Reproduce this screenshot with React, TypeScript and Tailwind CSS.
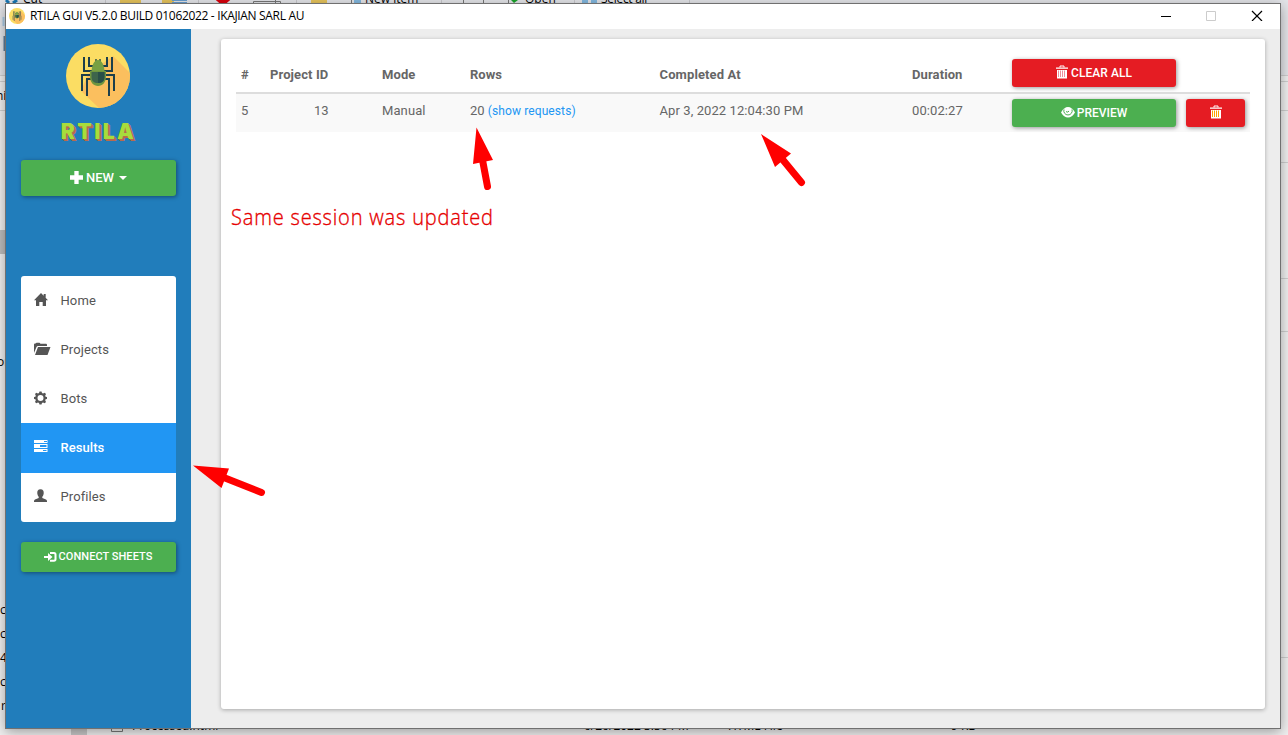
import React from "react";

type IconProps = { className?: string; children: React.ReactNode; box?: string };

function Glyph({ className, children, box = "0 0 14 14" }: IconProps) {
  return (
    <svg viewBox={box} className={className} fill="currentColor">
      {children}
    </svg>
  );
}

function SpiderLogo({ className }: { className: string }) {
  return (
    <svg viewBox="0 0 64 64" className={className}>
      <defs>
        <clipPath id="disc">
          <circle cx="32" cy="32" r="32" />
        </clipPath>
      </defs>
      <g clipPath="url(#disc)">
        <rect width="64" height="64" fill="#fbdd63" />
        <path d="M47 12L64 29V64H33L15 47L22 30Z" fill="#fbbf5e" />
      </g>
      <g fill="none" stroke="#1d3f4b" strokeWidth="2">
        <path d="M18 13V27H27M23 13V22H28M46 13V27H37M41 13V22H36" />
        <path d="M25 31H16V47M27 35H21V52M39 31H48V47M37 35H43V52" />
      </g>
      <path d="M30 15V19M34 15V19" stroke="#2f5144" strokeWidth="1.500" />
      <path d="M32 16C28 16 26 21 25.500 27H38.500C38 21 36 16 32 16Z" fill="#78a043" />
      <path d="M24 27H40V33C40 38 36.500 42 32 42S24 38 24 33Z" fill="#6f963f" />
      <path d="M25.500 28H38.500V33C38.500 37 36 39 32 39S25.500 37 25.500 33Z" fill="#3d654b" />
      <path d="M32 28H38.500V33C38.500 37 36 39 32 39Z" fill="#294f48" />
    </svg>
  );
}

function Home() {
  return <Glyph className="h-3.5 w-3.5"><path d="M7 0L14 7.200H12V13H8.700V9H5.300V13H2V7.200H0ZM9.700 1H11.700V5L9.700 3Z" /></Glyph>;
}
function Folder() {
  return <Glyph className="h-3.5 w-[17px]" box="0 0 17 14"><path d="M0 11V2.500Q0 1.500 1 1.500H1.500L2.500 .8H5.500L6.500 1.800H12Q13 1.800 13 3V4H4Q3 4 2.500 5ZM4 5H16.500L13.500 13H1Z" /></Glyph>;
}
function Gear() {
  return <Glyph className="h-3.5 w-3.5"><path fillRule="evenodd" d="M5.500 .4H7.500L8 2.100L9 2.500L10.700 1.700L12 3L11.200 4.700L11.600 5.700L13 6V8L11.600 8.300L11.200 9.300L12 11L10.700 12.300L9 11.500L8 11.900L7.500 13.400H5.500L5 11.900L4 11.500L2.300 12.300L1 11L1.800 9.300L1.400 8.300L0 8V6L1.400 5.700L1.800 4.700L1 3L2.300 1.700L4 2.500L5 2.100ZM6.500 4A3 3 0 1 0 6.500 10A3 3 0 1 0 6.500 4Z" /></Glyph>;
}
function Tasks() {
  return <Glyph className="h-3.5 w-3.5 -translate-y-px"><path fillRule="evenodd" d="M0 1H13.500V4H0ZM10 2V3H13V2ZM0 5H13.500V9H0ZM6 6V8H12.500V6ZM0 10H13.500V13H0ZM9 11V12H12.500V11Z" /></Glyph>;
}
function User() {
  return <Glyph className="h-3.5 w-3.5"><path d="M6.500 .3C9 .3 10 2 9.700 4.500C9.500 6 8.900 7.200 8.300 7.800V9L12 10.500Q13 11 13 12V13H0V12Q0 11 1 10.500L4.700 9V7.800C4.100 7.200 3.500 6 3.300 4.500C3 2 4 .3 6.500 .3Z" /></Glyph>;
}
function Trash({ stripe }: { stripe: string }) {
  return (
    <svg viewBox="0 0 12 14" className="h-3.5 w-3 -translate-y-px" fill="none">
      <path d="M4 2.500V1H8V2.500" stroke="white" />
      <path d="M0 2.500H12V3.700H0ZM1 5H11V13.500H1Z" fill="white" />
      <path d="M2.500 5.500V12M4.500 5.500V12M6.500 5.500V12M8.500 5.500V12" stroke={stripe} />
    </svg>
  );
}
function Eye() {
  return (
    <svg viewBox="0 0 14 12" className="h-3 w-3.5 -translate-y-px">
      <path d="M0 6.500Q3 1 7 1T14 6.500Q11 11.500 7 11.500T0 6.500Z" fill="white" />
      <path d="M3 3.500A4.200 4.200 0 1 0 11 3.500" fill="none" stroke="#4caf50" />
      <path d="M5 5.500Q6 7 8 5.200" fill="none" stroke="#4caf50" />
    </svg>
  );
}

const NAV = [
  { label: "Home", icon: <Home /> },
  { label: "Projects", icon: <Folder /> },
  { label: "Bots", icon: <Gear /> },
  { label: "Results", icon: <Tasks />, active: true },
  { label: "Profiles", icon: <User /> },
];

const SHADOW = "shadow-[1px_1px_4px_rgba(0,0,0,0.4)]";

function Sidebar() {
  return (
    <aside className="flex w-[185px] shrink-0 flex-col bg-[#217dbb] px-[15px]">
      <SpiderLogo className="mt-[15px] ml-[45px] h-16 w-16" />
      <div className="mt-3 h-6 text-center font-['Inter'] text-[21px] leading-6 font-black tracking-[2.5px] text-[#a8dc3c] [text-shadow:1px_1px_0_#b96a4c,2px_2px_0_#b96a4c]">
        RTILA
      </div>
      <button className={`mt-4 flex h-9 w-[155px] shrink-0 items-center justify-center rounded-[3px] bg-[#4caf50] text-[13px] font-medium text-white ${SHADOW}`}>
        <Glyph className="mr-1 -mt-0.5 h-[13px] w-[13px]" box="0 0 12 12"><path d="M4 0H8V4H12V8H8V12H4V8H0V4H4Z" /></Glyph>
        <span className="-ml-px">NEW</span>
        <span className="ml-[5px] border-x-4 border-t-4 border-x-transparent border-t-white" />
      </button>
      <nav className="mt-20 h-[246px] w-[155px] shrink-0 overflow-hidden rounded-[3px] bg-white">
        {NAV.map((n) => (
          <a key={n.label} className={n.active ? "flex h-[50px] items-center bg-[#2196f3] pl-[13px] font-medium tracking-[0.05px] text-white" : "flex h-[49px] items-center pl-[13px] tracking-[0.1px] text-[#555] last:h-12"}>
            <span className="-mt-0.5 w-[26.5px]">{n.icon}</span>
            <span>{n.label}</span>
          </a>
        ))}
      </nav>
      <button className={`mt-5 flex h-[30px] w-[155px] shrink-0 items-center justify-center rounded-[3px] bg-[#4caf50] text-[11px] font-medium tracking-[0.05px] text-white ${SHADOW}`}>
        <svg viewBox="0 0 13 12" className="mr-px h-3 w-[13px] -translate-x-px" fill="none" stroke="white" strokeWidth="2">
          <path d="M6 2H10Q11.500 2 11.500 3.500V8Q11.500 9.700 10 9.700H6" />
          <path d="M0 5H4V2L8.500 6L4 10V7H0Z" fill="white" stroke="none" />
        </svg>
        CONNECT SHEETS
      </button>
    </aside>
  );
}

const COLS = "grid grid-cols-[29px_112px_88px_189.500px_252.500px_100px_164px_69px] pl-[5px]";

function Results() {
  return (
    <section className="mt-2.5 ml-[30px] h-[670px] w-[1044px] rounded-[3px] bg-white px-[15px] pt-[15px] shadow-[0_1px_4px_rgba(0,0,0,0.3)]">
      <div className={`${COLS} h-10 border-b-2 border-[#ddd] font-bold`}>
        <span className="pt-[11px]">#</span>
        <span className="pt-[11px] tracking-[0.1px]">Project ID</span>
        <span className="pt-[11px] tracking-[0.1px]">Mode</span>
        <span className="pt-[11px]">Rows</span>
        <span className="pt-[11px] tracking-[0.12px]">Completed At</span>
        <span className="pt-[11px] tracking-[0.1px]">Duration</span>
        <button className={`mt-[5px] flex h-7 items-center justify-center gap-[3px] rounded-[3px] bg-[#e51c23] text-xs font-medium tracking-[0.05px] text-white ${SHADOW}`}>
          <Trash stripe="#ee8f9b" /> CLEAR ALL
        </button>
      </div>
      <div className={`${COLS} h-[38px] bg-[#f9f9f9]`}>
        <span className="pt-[7px]">5</span>
        <span className="pt-[7px] pl-11">13</span>
        <span className="pt-[7px] tracking-[0.1px]">Manual</span>
        <span className="pt-[7px]">20 <a className="text-xs tracking-[0.1px] text-[#2196f3]">(show requests)</a></span>
        <span className="pt-[7px] tracking-[0.09px]">Apr 3, 2022 12:04:30 PM</span>
        <span className="pt-[7px] tracking-[0.08px]">00:02:27</span>
        <button className={`mt-[5px] flex h-7 items-center justify-center gap-0.5 rounded-[3px] bg-[#4caf50] text-xs font-medium text-white ${SHADOW}`}>
          <Eye /> PREVIEW
        </button>
        <button className={`mt-[5px] ml-2.5 flex h-7 w-[59px] items-center justify-center rounded-[3px] bg-[#e51c23] ${SHADOW}`}>
          <Trash stripe="#ffa000" />
        </button>
      </div>
    </section>
  );
}

/* Fragments of the file-manager window that peek out from behind the app window. */
function Desktop() {
  return (
    <div className="absolute inset-0 overflow-hidden bg-[#f0f0f0] font-['Open_Sans'] text-xs leading-4 text-black">
      <div className="absolute top-0 right-0 left-0 h-[75px] bg-[#e4e5e9]" />
      <svg className="absolute inset-0" width="1288" height="735" fill="none">
        <path d="M0 75.500H1288M0 81.500H1288M0 110.500H1288M1281 162.500H1288M1281 278.500H1288M1281 331.500H1288M1281 657.500H1288" stroke="#cfcfcf" />
        <path d="M0 230H6V254H0Z" fill="#bdbdbd" />
        <path d="M3.500 17V26" stroke="#a9cbe6" strokeWidth="2" />
        <path d="M4.500 36V51" stroke="#5f7f9d" strokeWidth="2" />
        <path d="M71 729H87V735H71Z" fill="#c8c8c8" />
        <path d="M6 0L9 3M17 0L13 3" stroke="#1978b5" strokeWidth="3" />
        <path d="M120 0H141V3H120ZM162 0H174V3H162ZM311 0H327V3H311Z" fill="#e6c35c" />
        <path d="M172 .5H187M172 2.500H187" stroke="#689ed0" />
        <path d="M215 -4L223 3L231 -4" stroke="#d8000c" strokeWidth="5" />
        <path d="M253.500 3V1.500H280.500V3M275.500 0V3M351.500 0V3M463.500 0V3M483.500 0V3M508.500 0V3" stroke="#777" />
        <path d="M105.500 0V3M198.500 0V3M296.500 0V3M441.500 0V3M574.500 0V3M689.500 0V3" stroke="#c8c8cc" />
        <path d="M354 0H361V3H354ZM582 0H588V3H582ZM591 0H597V3H591Z" fill="#82b8df" />
        <path d="M511 0H518L514 3Z" fill="#18a329" />
        <path d="M111.500 725V731.500H122.500V725" stroke="#777" />
      </svg>
      <span className="absolute top-[-9px] left-[23px]">Cut</span>
      <span className="absolute top-[-9px] left-[365px] whitespace-nowrap">New item</span>
      <span className="absolute top-[-9px] left-[525px]">Open</span>
      <span className="absolute top-[-9px] left-[601px] tracking-[-0.3px] whitespace-nowrap">Select all</span>
      <span className="absolute top-[88px] left-[-4px]">nis</span>
      <span className="absolute top-[354px] left-[-3px]">or</span>
      <span className="absolute top-[602px] left-0">c</span>
      <span className="absolute top-[626px] left-0">c</span>
      <span className="absolute top-[650px] left-0">4</span>
      <span className="absolute top-[674px] left-0">c</span>
      <span className="absolute top-[698px] left-px">r</span>
      <span className="absolute top-[718px] left-[132px] whitespace-nowrap">Processed.html</span>
      <span className="absolute top-[718px] left-[584px] whitespace-nowrap">6/26/2022 3:36 PM</span>
      <span className="absolute top-[718px] left-[728px] whitespace-nowrap">HTML File</span>
      <span className="absolute top-[718px] left-[951px] whitespace-nowrap">9 KB</span>
    </div>
  );
}

function Annotations() {
  return (
    <>
      <svg className="pointer-events-none absolute inset-0" width="1288" height="735" fill="red" stroke="red" strokeWidth="7" strokeLinecap="round">
        <path d="M482.500 160L487.500 186.500M783 160L801.500 182.500M225 478L261.500 492.500" />
        <path stroke="none" d="M476.500 127.500L493 160L473 164ZM761 134L791 153.500L775 167ZM193 465.500L229 468.500L221.500 488Z" />
      </svg>
      <p className="absolute top-[201px] left-[231px] origin-left scale-x-[0.91] font-['Open_Sans'] text-[22px] leading-[30px] font-light whitespace-nowrap tracking-[0.9px] text-[#e60000] [-webkit-text-stroke:0.35px_#e60000]">
        Same session was updated
      </p>
    </>
  );
}

export default function App() {
  return (
    <div className="relative flex h-[735px] w-[1288px] overflow-hidden font-['Roboto',sans-serif] text-[13px] leading-5 text-[#666]">
      <Desktop />
      <main className="relative mt-[3px] ml-[5px] h-[726px] w-[1276px] border border-[#707070] bg-[#ededed] shadow-[0_3px_12px_rgba(0,0,0,0.35)]">
        <header className="flex h-[25px] items-center bg-white">
          <SpiderLogo className="ml-[3px] h-4 w-4 -translate-y-px" />
          <span className="ml-[5px] flex-1 -translate-y-px font-['Open_Sans'] text-xs tracking-[-0.33px] text-black">RTILA GUI V5.2.0 BUILD 01062022 - IKAJIAN SARL AU</span>
          <svg width="102" height="11" className="mr-[17px] -translate-y-px" fill="none" stroke="black">
            <path d="M0 6.500H10" />
            <path d="M45.500 1.500H54.500V10.500H45.500Z" stroke="#ccc" />
            <path d="M91 1L101 11M101 1L91 11" strokeWidth="1.200" />
          </svg>
        </header>
        <div className="flex h-[699px]">
          <Sidebar />
          <Results />
        </div>
      </main>
      <Annotations />
    </div>
  );
}
